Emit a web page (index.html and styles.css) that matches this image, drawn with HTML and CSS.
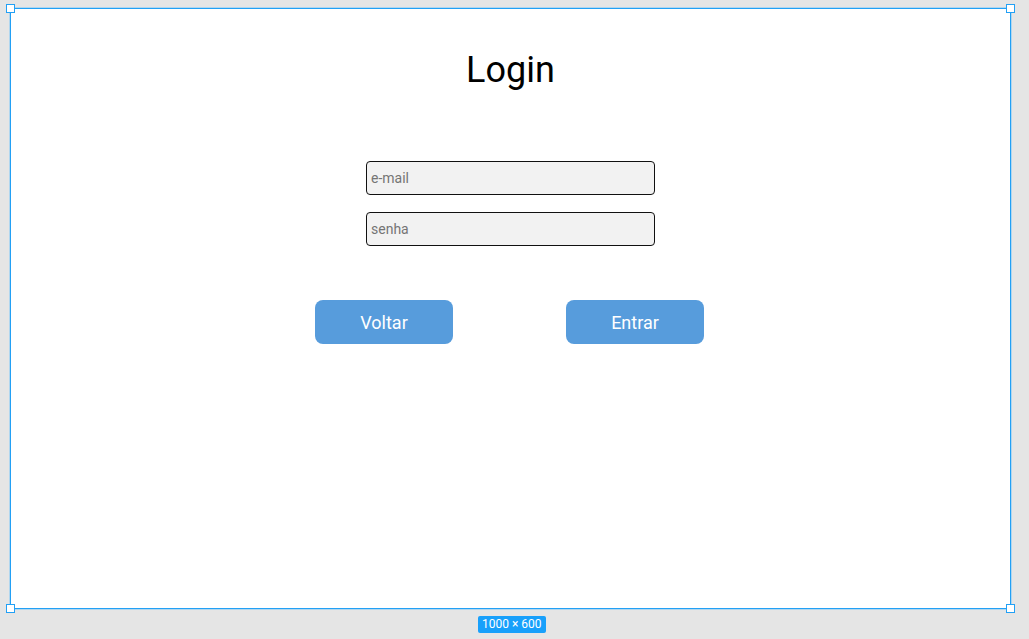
FILE: index.html
```html
<!DOCTYPE html>
<html lang="pt">
<head>
<meta charset="utf-8">
<title>Login</title>
<link rel="stylesheet" href="styles.css">
</head>
<body>
<div class="stage">
  <div class="frame">
    <span class="handle tl"></span>
    <span class="handle tr"></span>
    <span class="handle bl"></span>
    <span class="handle br"></span>
    <h1 class="title">Login</h1>
    <form class="form">
      <input class="field" type="text" placeholder="e-mail">
      <input class="field" type="password" placeholder="senha">
    </form>
    <div class="actions">
      <button class="btn" type="button">Voltar</button>
      <button class="btn" type="button">Entrar</button>
    </div>
  </div>
  <div class="size-label">1000 × 600</div>
</div>
</body>
</html>
```

FILE: styles.css
```css
* { box-sizing: border-box; }
html, body {
  margin: 0;
  padding: 0;
  background: #e5e5e5;
  font-family: Roboto, "Liberation Sans", sans-serif;
  width: 1029px;
  height: 639px;
  overflow: hidden;
}
.stage {
  padding: 8px 0 0 10px;
  display: flex;
  flex-direction: column;
  align-items: flex-start;
}
.frame {
  position: relative;
  width: 1001px;
  height: 601px;
  background: #fff;
  border: 1px solid #22a0f5;
  box-shadow: 0 0 0 0.5px #7cc8fa;
  display: flex;
  flex-direction: column;
  align-items: center;
  padding-top: 40px;
}
.handle {
  position: absolute;
  width: 9px;
  height: 9px;
  background: #fff;
  border: 1.5px solid #22a0f5;
}
.handle.tl { left: -5px; top: -5px; }
.handle.tr { right: -5px; top: -5px; }
.handle.bl { left: -5px; bottom: -5px; }
.handle.br { right: -5px; bottom: -5px; }
.title {
  margin: 0;
  font-weight: 400;
  font-size: 36px;
  line-height: 42px;
  color: #000;
}
.form {
  margin-top: 70px;
  display: flex;
  flex-direction: column;
  gap: 17px;
}
.field {
  width: 289px;
  height: 34px;
  border: 1px solid #111;
  border-radius: 4px;
  background: #f2f2f2;
  padding: 0 4px;
  font-family: Roboto, "Liberation Sans", sans-serif;
  font-size: 14px;
  color: #333;
  outline: none;
  -webkit-appearance: none;
  appearance: none;
}
.field::placeholder { color: #757575; }
.actions {
  margin-top: 54px;
  margin-right: 2px;
  display: flex;
  gap: 113px;
}
.btn {
  width: 138px;
  height: 44px;
  border: none;
  border-radius: 8px;
  background: #579cdc;
  color: #fff;
  font-family: Roboto, "Liberation Sans", sans-serif;
  font-size: 18px;
  font-weight: 400;
  padding: 0;
}
.size-label {
  align-self: flex-start;
  margin: 7px 0 0 468px;
  background: #18a0fb;
  color: #fff;
  font-size: 12px;
  line-height: 17px;
  height: 17px;
  padding: 0 4px;
  border-radius: 2px;
}
```
